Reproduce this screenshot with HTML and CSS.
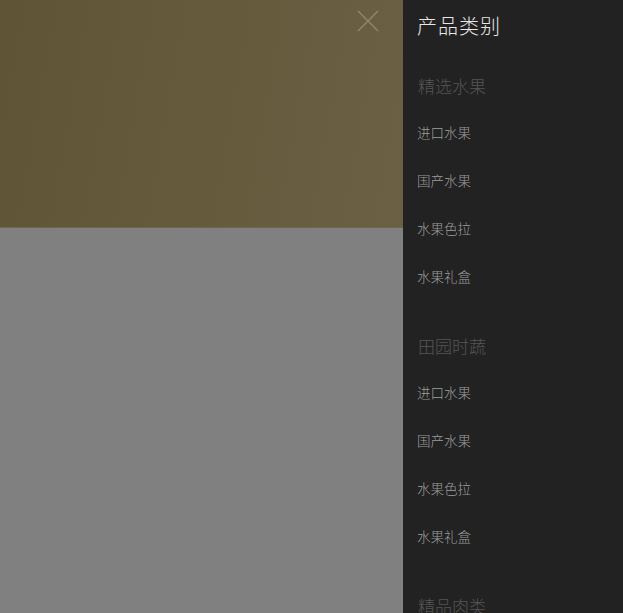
FILE: index.html
```html
<!DOCTYPE html>
<html lang="zh-CN">
<head>
  <meta charset="UTF-8" />
  <meta name="viewport" content="width=device-width, initial-scale=1.0" />
  <title>产品类别</title>
  <link rel="stylesheet" href="styles.css">
</head>
<body>

  <div class="page">
    <div class="mask">
      <div class="mask-top">
        <button class="close" aria-label="关闭">
          <svg width="24" height="24" viewBox="0 0 24 24">
            <path d="M2 2 L22 22 M22 2 L2 22" stroke="#8c856a" stroke-width="1.6" fill="none" />
          </svg>
        </button>
      </div>
      <div class="mask-bottom"></div>
    </div>

    <div class="menu">
      <div class="menu-title">产品类别</div>

      <div class="group">
        <div class="group-name">精选水果</div>
        <a class="item" href="#">进口水果</a>
        <a class="item" href="#">国产水果</a>
        <a class="item" href="#">水果色拉</a>
        <a class="item" href="#">水果礼盒</a>
      </div>

      <div class="group">
        <div class="group-name">田园时蔬</div>
        <a class="item" href="#">进口水果</a>
        <a class="item" href="#">国产水果</a>
        <a class="item" href="#">水果色拉</a>
        <a class="item" href="#">水果礼盒</a>
      </div>

      <div class="group">
        <div class="group-name">精品肉类</div>
      </div>
    </div>
  </div>

</body>
</html>
```

FILE: styles.css
```css
html, body {
  margin: 0;
  padding: 0;
  height: 100%;
  overflow: hidden;
  background: #808080;
  font-family: "Noto Sans CJK SC", "Noto Sans", sans-serif;
}
.page {
  display: flex;
  height: 100%;
}
.mask {
  flex: 1;
  display: flex;
  flex-direction: column;
}
.mask-top {
  height: 228px;
  background: linear-gradient(100deg, #5f5536 0%, #655a3c 50%, #6b6044 100%);
  border-bottom: 1px solid #6e6650;
  box-sizing: border-box;
  display: flex;
  justify-content: flex-end;
  align-items: flex-start;
}
.close {
  margin: 9px 23px 0 0;
  padding: 0;
  width: 24px;
  height: 24px;
  border: 0;
  background: none;
  cursor: pointer;
}
.mask-bottom {
  flex: 1;
  background: #808080;
}
.menu {
  width: 220px;
  background: #222;
  padding-left: 14px;
  box-sizing: border-box;
  display: flex;
  flex-direction: column;
}
.menu-title {
  height: 52px;
  line-height: 52px;
  margin-bottom: 12px;
  font-size: 20px;
  font-weight: 300;
  color: #e8e8e8;
  letter-spacing: 1px;
}
.group {
  display: flex;
  flex-direction: column;
  margin-bottom: 24px;
}
.group-name {
  height: 44px;
  line-height: 44px;
  font-size: 17px;
  font-weight: 300;
  color: #555;
  padding-left: 1px;
}
.item {
  height: 48px;
  line-height: 48px;
  font-size: 13.5px;
  font-weight: 300;
  color: #9e9e9e;
  text-decoration: none;
}
```
